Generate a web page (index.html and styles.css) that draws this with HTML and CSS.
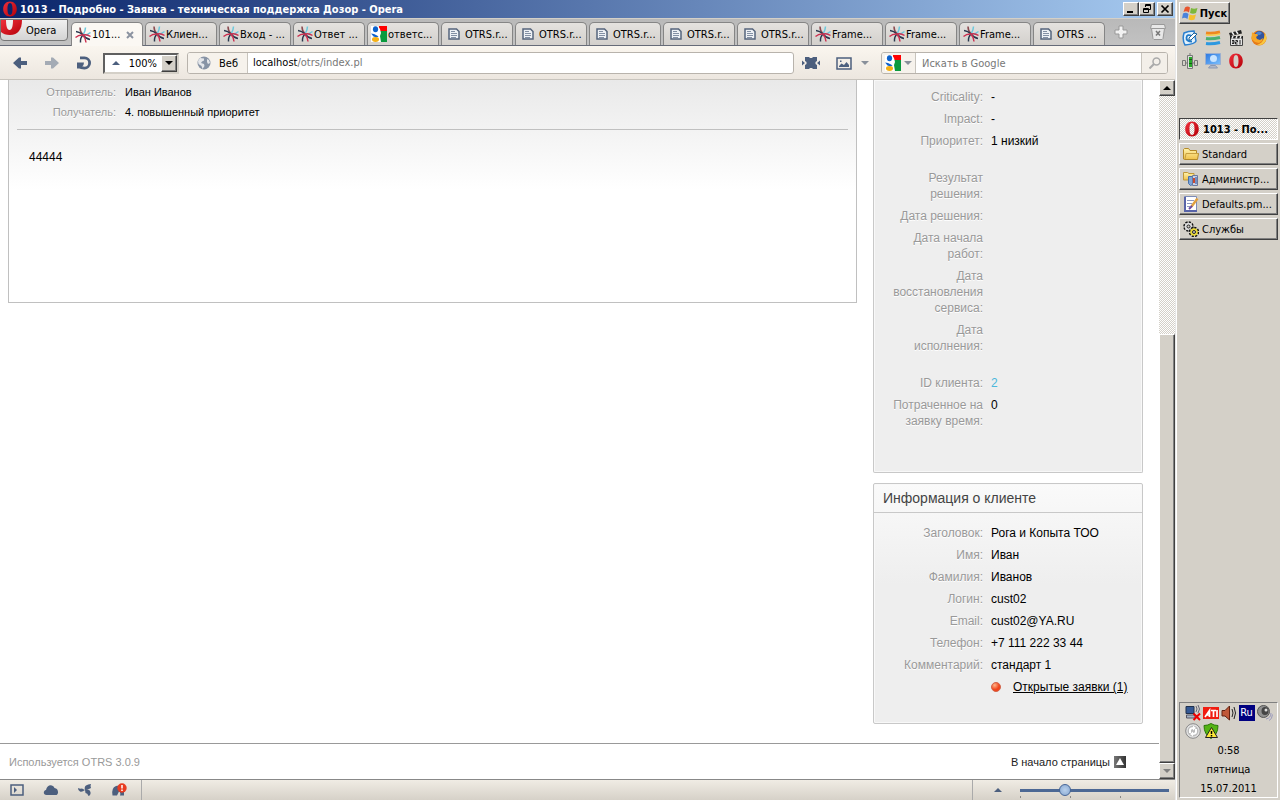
FILE: index.html
```html
<!DOCTYPE html>
<html lang="ru">
<head>
<meta charset="utf-8">
<title>1013 - Подробно - Заявка - техническая поддержка Дозор - Opera</title>
<link rel="stylesheet" href="styles.css">
</head>
<body>
<svg class="defs" aria-hidden="true">
  <defs>
    <linearGradient id="red" x1="0" y1="0" x2="1" y2="1"><stop offset="0" stop-color="#f0303c"/><stop offset="1" stop-color="#b40008"/></linearGradient>
    <linearGradient id="fold" x1="0" y1="0" x2="0" y2="1"><stop offset="0" stop-color="#fff3ac"/><stop offset="1" stop-color="#efc24c"/></linearGradient>
    <linearGradient id="dark" x1="0" y1="0" x2="1" y2="0"><stop offset="0" stop-color="#777"/><stop offset="1" stop-color="#333"/></linearGradient>
    <linearGradient id="screen" x1="0" y1="0" x2="1" y2="1"><stop offset="0" stop-color="#2c78e0"/><stop offset="1" stop-color="#7cc0fc"/></linearGradient>
    <radialGradient id="orb" cx=".35" cy=".3"><stop offset="0" stop-color="#ffb488"/><stop offset="1" stop-color="#f0441c"/></radialGradient>
  </defs>
  <symbol id="opera" viewBox="0 0 16 16"><path fill="url(#red)" fill-rule="evenodd" d="M8 .5c4.200 0 6.800 3.200 6.800 7.500S12.200 15.500 8 15.500 1.200 12.300 1.200 8 3.800.5 8 .5zm0 1.500C6 2 5.500 5 5.500 8S6 14 8 14s2.500-3 2.500-6S10 2 8 2z"/></symbol>
  <symbol id="otrs" viewBox="0 0 16 16"><g fill="none" stroke-width="1.500"><path stroke="#6cc8dc" d="M10.500 .5Q10.500 4 8 8M15.500 5.500Q12 8.500 8 8"/><path stroke="#8a4a50" d="M5 .5Q5 5 8 8"/><path stroke="#29384e" d="M1 4.500Q5 5 8 8Q11 12 15 12.500M8 8Q5 11 5.500 15.500"/><path stroke="#cc3050" d="M.5 10.500Q4 7.500 8 8Q12 7 15.500 9.500M8 8Q10.500 11 11 15.500"/></g></symbol>
  <symbol id="google" viewBox="0 0 16 16"><path fill="#f00" d="M8 0h8v5H8z"/><path fill="#0a9a3e" d="M9 5h7v11H9z"/><path fill="#fff" d="M0 0h7l2 3 1 4-1 3 1 6H0z"/><ellipse cx="4.500" cy="3.200" rx="2.600" ry="3" fill="#0c62cc"/><path fill="#1264cc" d="M0 7.500l3 .5 3 1.500 1.500 1-2 1-3-1z"/><ellipse cx="4.500" cy="13.500" rx="3.500" ry="2.400" fill="#f5b014"/></symbol>
  <symbol id="doc" viewBox="0 0 12 12"><path fill="#eef1f5" stroke="#55647c" stroke-width="1.500" d="M1 1h7.500L11 3.500V11H1z"/><path stroke="#8390a4" d="M3 3.500h4M3 5.500h6M3 7.500h6M3 9.500h5"/></symbol>
  <symbol id="arrow" viewBox="0 0 16 14"><path fill="currentColor" d="M7 1.500h2V5h6v4H9v3.500H7L1 7z"/></symbol>
  <symbol id="up" viewBox="0 0 8 4"><path fill="currentColor" d="M4 0l4 4H0z"/></symbol>
  <symbol id="down" viewBox="0 0 8 4"><path fill="currentColor" d="M0 0h8L4 4z"/></symbol>
</svg>

<div class="desktop">
<main class="window">
  <header class="titlebar">
    <svg class="i16"><use href="#opera"/></svg>
    <h1>1013 - Подробно - Заявка - техническая поддержка Дозор - Opera</h1>
    <div class="caption">
      <button class="bevel" aria-label="Свернуть"><svg viewBox="0 0 12 10"><path d="M2 7h6v2H2z"/></svg></button>
      <button class="bevel" aria-label="Восстановить"><svg viewBox="0 0 12 10"><path fill="none" stroke="#000" d="M4.500 3V.5h5v5H8M4 1.500h6M2.500 4.500h5v4h-5zM2 5.500h6"/></svg></button>
      <button class="bevel close" aria-label="Закрыть"><svg viewBox="0 0 12 10"><path fill="none" stroke="#000" stroke-width="1.700" d="M2.500 1.500l7 7M9.500 1.500l-7 7"/></svg></button>
    </div>
  </header>

  <nav class="tabbar">
    <button class="menu"><svg class="menu-logo" viewBox="0 0 21 16"><path fill="url(#red)" d="M0 0h21c0 9-4 15-12 15-4 0-7-1-9-3z"/><path fill="#eee" d="M5 0h7c0 6-1 10-3.500 10S5 6 5 0z"/></svg>Opera</button>
    <button class="tab active"><svg class="i16"><use href="#otrs"/></svg><span>101...</span><svg class="x" viewBox="0 0 8 8"><path stroke="#8b93a0" stroke-width="2" d="M1 1l6 6M7 1L1 7"/></svg></button>
    <button class="tab"><svg class="i16"><use href="#otrs"/></svg><span>Клиен...</span></button>
    <button class="tab"><svg class="i16"><use href="#otrs"/></svg><span>Вход - ...</span></button>
    <button class="tab"><svg class="i16"><use href="#otrs"/></svg><span>Ответ ...</span></button>
    <button class="tab"><svg class="i16"><use href="#google"/></svg><span>ответс...</span></button>
    <button class="tab"><svg class="idoc"><use href="#doc"/></svg><span>OTRS.r...</span></button>
    <button class="tab"><svg class="idoc"><use href="#doc"/></svg><span>OTRS.r...</span></button>
    <button class="tab"><svg class="idoc"><use href="#doc"/></svg><span>OTRS.r...</span></button>
    <button class="tab"><svg class="idoc"><use href="#doc"/></svg><span>OTRS.r...</span></button>
    <button class="tab"><svg class="idoc"><use href="#doc"/></svg><span>OTRS.r...</span></button>
    <button class="tab"><svg class="i16"><use href="#otrs"/></svg><span>Frame...</span></button>
    <button class="tab"><svg class="i16"><use href="#otrs"/></svg><span>Frame...</span></button>
    <button class="tab"><svg class="i16"><use href="#otrs"/></svg><span>Frame...</span></button>
    <button class="tab"><svg class="idoc"><use href="#doc"/></svg><span>OTRS ...</span></button>
    <button class="plain add" aria-label="Новая вкладка"><svg viewBox="0 0 14 14"><path fill="#f2f2f2" stroke="#999" d="M5 1h4v4h4v4H9v4H5V9H1V5h4z"/></svg></button>
    <button class="plain bin" aria-label="Закрытые вкладки"><svg viewBox="0 0 16 16"><path fill="#e8e8e8" stroke="#999" d="M1.500 .5h13l1 4h-1l-1.500 10-1 1H4l-1-1-1.500-10h-1z"/><path stroke="#999" d="M1.500 4.500h13"/><path stroke="#777" stroke-width="1.500" d="M6 7l4 4.500M10 7l-4 4.500"/></svg></button>
  </nav>

  <div class="toolbar">
    <button class="plain" aria-label="Назад"><svg class="nav"><use href="#arrow"/></svg></button>
    <button class="plain off" aria-label="Вперед"><svg class="nav flip"><use href="#arrow"/></svg></button>
    <button class="plain" aria-label="Обновить"><svg class="nav" viewBox="0 0 16 14"><path fill="none" stroke="currentColor" stroke-width="2.800" d="M4 1.900h4.500a5 5 0 0 1 0 10.200q-3.500 0-5-1.600"/><path fill="currentColor" d="M1 6.500h7L7.500 9 4.500 12.500H1z"/></svg></button>
    <div class="zoom"><svg class="tri"><use href="#up"/></svg><input aria-label="Масштаб" value="100%"><button class="bevel" aria-label="Выбрать масштаб"><svg class="tri"><use href="#down"/></svg></button></div>
    <div class="address">
      <button class="web"><svg viewBox="0 0 14 14"><circle cx="7" cy="7" r="6.500" fill="#8793a5"/><path fill="#e4e6ea" d="M3 2l4 .5 0 2-2 1-1 1.500 3 1 .5 2-2 3-1-3-3-2-.5-3zM10 3l2 1 1 3-2 1-1-2z"/></svg>Веб</button>
      <div class="url" contenteditable="true" role="textbox" aria-label="Адрес"><b>localhost</b>/otrs/index.pl</div>
    </div>
    <button class="plain" aria-label="По ширине"><svg class="fit" viewBox="0 0 18 12"><path fill="currentColor" d="M3 0h4l1 1h2l1-1h4v4l-1.500 1v2l1.500 1v4h-4l-1-1H8l-1 1H3V8l1.500-1V5L3 4zM0 3.500l3 2.500-3 2.500zM18 3.500L15 6l3 2.500z"/></svg></button>
    <button class="plain pics" aria-label="Изображения"><svg class="pic" viewBox="0 0 16 13"><path fill="none" stroke="currentColor" stroke-width="1.500" d="M1 1h14v11H1z"/><path fill="currentColor" d="M3 10V9l2.500-2.500L8 8l2.500-3L13 8v2zM4 3.500h1.500V5H4z"/></svg><svg class="tri"><use href="#down"/></svg></button>
    <div class="search">
      <button class="engine" aria-label="Поисковая система"><svg class="i16"><use href="#google"/></svg><svg class="tri"><use href="#down"/></svg></button>
      <input aria-label="Поиск" placeholder="Искать в Google">
      <button class="go" aria-label="Найти"><svg viewBox="0 0 12 12"><circle cx="7.500" cy="4.500" r="3.500" fill="none" stroke="#aaa" stroke-width="1.500"/><path stroke="#aaa" stroke-width="2" d="M5 7l-4.500 4.500"/></svg></button>
    </div>
  </div>

  <div class="view">
    <div class="page">
      <div class="columns">
        <article class="ticket">
          <dl class="sender">
            <dt>Отправитель:</dt><dd>Иван Иванов</dd>
            <dt>Получатель:</dt><dd>4. повышенный приоритет</dd>
          </dl>
          <p>44444</p>
        </article>
        <aside class="side">
          <section class="panel cut">
            <dl class="facts">
              <dt>Criticality:</dt><dd>-</dd>
              <dt>Impact:</dt><dd>-</dd>
              <dt>Приоритет:</dt><dd>1 низкий</dd>
              <dt class="group">Результат решения:</dt><dd></dd>
              <dt>Дата решения:</dt><dd></dd>
              <dt>Дата начала работ:</dt><dd></dd>
              <dt>Дата восстановления сервиса:</dt><dd></dd>
              <dt>Дата исполнения:</dt><dd></dd>
              <dt class="group">ID клиента:</dt><dd class="group"><a class="id" href="#">2</a></dd>
              <dt>Потраченное на заявку время:</dt><dd>0</dd>
            </dl>
          </section>
          <section class="panel client">
            <h2>Информация о клиенте</h2>
            <dl class="facts">
              <dt>Заголовок:</dt><dd>Рога и Копыта ТОО</dd>
              <dt>Имя:</dt><dd>Иван</dd>
              <dt>Фамилия:</dt><dd>Иванов</dd>
              <dt>Логин:</dt><dd>cust02</dd>
              <dt>Email:</dt><dd>cust02@YA.RU</dd>
              <dt>Телефон:</dt><dd>+7 111 222 33 44</dd>
              <dt>Комментарий:</dt><dd>стандарт 1</dd>
              <dt></dt><dd class="open"><svg viewBox="0 0 10 10"><circle cx="5" cy="5" r="4.500" fill="url(#orb)" stroke="#d0654c"/></svg><a href="#">Открытые заявки (1)</a></dd>
            </dl>
          </section>
        </aside>
      </div>
      <footer class="foot">
        <span>Используется OTRS 3.0.9</span>
        <a href="#">В начало страницы<svg viewBox="0 0 12 12"><path fill="url(#dark)" d="M0 0h12v12H0z"/><path fill="#fff" d="M6 2l4 7H2z"/></svg></a>
      </footer>
    </div>
    <div class="scroll">
      <button class="bevel" aria-label="Вверх"><svg class="tri"><use href="#up"/></svg></button>
      <div class="track"></div>
      <div class="thumb bevel"></div>
      <button class="bevel off" aria-label="Вниз"><svg class="tri"><use href="#down"/></svg></button>
    </div>
  </div>

  <div class="status">
    <div class="tools">
      <button class="plain" aria-label="Панели"><svg viewBox="0 0 16 14"><path fill="none" stroke="currentColor" stroke-width="1.500" d="M2 2h12v10H2z"/><path fill="currentColor" d="M5 4l3 3-3 3z"/></svg></button>
      <button class="plain" aria-label="Opera Link"><svg viewBox="0 0 16 14"><path fill="currentColor" d="M3.500 12C0 12 0 7.500 3 7 4 1 10 1 11.500 5c4 0 5 7 1 7z"/></svg></button>
      <button class="plain" aria-label="Opera Unite"><svg viewBox="0 0 16 14"><path fill="currentColor" d="M1 5q2 1 4 .5L8 7Q5 9.500 3 8.500 1 8 1 5zM14 1q-1 2 0 4l-3 1.500L8 7Q7 4 9 2.500 11 1 14 1zM8 7q5-1 5.500 2 .5 3-2 4-1-3-3-3z"/></svg></button>
      <button class="plain" aria-label="Opera Turbo"><svg viewBox="0 0 16 14"><path fill="currentColor" d="M1.500 12.500Q0 5 5 3t8 3v6.500H9q1-3-1-4l-2 4z"/><circle cx="11" cy="5" r="4.700" fill="#e83c20"/><path stroke="#fff" stroke-width="1.500" d="M11 2v3.500M11 6.500V8"/></svg></button>
    </div>
    <div class="level">
      <button class="plain" aria-label="Масштаб"><svg class="tri"><use href="#up"/></svg></button>
      <input type="range" min="20" max="300" value="100" aria-label="Масштаб страницы">
    </div>
  </div>
</main>

<aside class="taskbar">
  <button class="bevel start"><svg viewBox="0 0 16 16"><path fill="#e8552c" d="M3 2.500Q5.500 .5 8 2.500L7 7.500q-3-2-5.500-.5z"/><path fill="#7cb83c" d="M9 3q3 1.500 6.500 0L14 8q-3 1.500-6 0z"/><path fill="#4a84dc" d="M1 8.500q3-1.500 5.500.5L5.500 14q-3-2-5.500-.5z"/><path fill="#f4c030" d="M7.500 9.500q3 1.500 6.500 0l-1.500 5q-3 1.500-6 0z"/></svg>Пуск</button>
  <div class="quick">
    <svg viewBox="0 0 16 16"><path fill="#e4f2fc" stroke="#2a80d0" stroke-width="1.500" d="M2 3q4-2 10-2l2 10q-1 3-11 4Q0 10 2 3z"/><path fill="none" stroke="#207ac8" stroke-width="1.800" d="M10 6Q5 3.500 4.500 7.500T10 11.500"/><path fill="#fff" stroke="#186098" d="M7 8l5-5 3 1-6 6H7z"/></svg>
    <svg viewBox="0 0 16 16"><path fill="none" stroke="#f08820" stroke-width="3" d="M1 3q6 1 14-1"/><path fill="none" stroke="#f8d050" stroke-width="1.500" d="M1 5q6 1 14-1"/><path fill="none" stroke="#4cb070" stroke-width="3" d="M1 8.500q6 1 14-1"/><path fill="none" stroke="#2c98e0" stroke-width="3" d="M1 13.500q6 1 14-1"/></svg>
    <svg viewBox="0 0 16 16"><path fill="#222" d="M1 3l12-3 1 3.500L2 6z"/><path fill="#e4e4e4" stroke="#444" d="M2.500 6.500h12v9h-12z"/><path fill="#222" d="M2 6h13v2.500H2z"/><path stroke="#eee" stroke-width="1.500" d="M4 2l2 3M8 1l2 3M5 6l-1 2.500M9 6L8 8.500M13 6l-1 2.500"/><path fill="none" stroke="#222" d="M4 10.500h2v3H4M4 12h2M7.500 10.500h2V12h-2v2h2M12 10v4.500"/></svg>
    <svg viewBox="0 0 16 16"><circle cx="8" cy="8" r="7.500" fill="#e67a18"/><circle cx="8.500" cy="6" r="5" fill="#33549e"/><path fill="#4c84d0" d="M5 3q3-3 6 0l-2 2H6z"/><path fill="#f8a828" d="M1 2l2 2 3 0 1 1.500L5 7l1 2 3 1 3-2-1 3-3 2-4-1L.5 9z"/><path fill="#f8c840" d="M14 3q3 5 0 9-3 4-8 3 6-2 7-7z"/></svg>
    <svg viewBox="0 0 16 16"><path fill="#ddd" stroke="#777" d="M5.500 2.500h5v13h-5z"/><path fill="#28a828" d="M7 4h3v10H7z"/><path fill="#145c14" d="M7 6h3v1H7zM7 10h3v1H7z"/><path fill="none" stroke="#777" d="M8 2V0M.5 7.500h3v5h-3zM12.500 7.500h3v5h-3zM4 10h2M10 10h2"/></svg>
    <svg viewBox="0 0 16 16"><path fill="url(#screen)" stroke="#9cb0d0" d="M.5 .5h15v11H.5z"/><circle cx="8.500" cy="5.500" r="3.500" fill="#c8e4ff"/><path fill="#b0b8c8" stroke="#8c98b0" d="M5.500 12.500h5l2 2.500h-9z"/></svg>
    <svg><use href="#opera"/></svg>
  </div>
  <div class="tasks">
    <button class="bevel task current"><svg><use href="#opera"/></svg>1013 - По...</button>
    <button class="bevel task"><svg viewBox="0 0 16 16"><path fill="url(#fold)" stroke="#b48a28" d="M.5 13V3.500l1-1h4l1.500 2h6.500v3h2l-1 6h-13z"/><path fill="none" stroke="#c8a040" d="M2 13l1-5.500h12"/></svg>Standard</button>
    <button class="bevel task"><svg viewBox="0 0 16 16"><path fill="url(#fold)" stroke="#c09838" d="M.5 9V1.500h4l1.500 1h5V9z"/><path fill="#7ca4d8" stroke="#4870a8" d="M5.500 5.500h4v8l-2 1-2-2z"/><path fill="#c8d0e4" stroke="#6878a0" d="M9.500 4.500h5v10h-5z"/><path stroke="#c84830" stroke-width="2" d="M11 7v5"/><path stroke="#5878b8" stroke-width="1.500" d="M13 6v7"/></svg>Администр...</button>
    <button class="bevel task"><svg viewBox="0 0 16 16"><path fill="#fff" stroke="#7c8cb8" d="M1.500 .5h12v14h-12z"/><path fill="#5864a8" d="M1 14h13v2H1zM1 1h2v14H1z"/><path stroke="#8c98c0" d="M4 4.500h7M4 7.500h5M4 10.500h3"/><path stroke="#e0a040" stroke-width="2.500" d="M14.500 2.500l-6 8"/><path stroke="#6848a0" stroke-width="2" d="M9 10l-3 3"/></svg>Defaults.pm...</button>
    <button class="bevel task"><svg viewBox="0 0 16 16"><g fill="none"><circle cx="5.500" cy="5.500" r="4" stroke="#111" stroke-width="2.500" stroke-dasharray="2 1.100"/><circle cx="5.500" cy="5.500" r="2.800" stroke="#ddd" stroke-width="2"/><circle cx="5.500" cy="5.500" r="1.500" stroke="#222"/><circle cx="11" cy="11" r="4" stroke="#111" stroke-width="2.500" stroke-dasharray="2 1.100"/><circle cx="11" cy="11" r="2.800" stroke="#e8d838" stroke-width="2"/><circle cx="11" cy="11" r="1.500" stroke="#222"/></g></svg>Службы</button>
  </div>
  <div class="tray">
    <div class="tray-icons">
      <svg viewBox="0 0 16 16"><path fill="#345894" stroke="#20304c" d="M1 1.500h8v7H1z"/><path fill="#a8b4c4" stroke="#556" d="M1.500 10h8l1 3h-9z"/><path fill="none" stroke="#667" d="M11 1q2 3 0 6M13 0q3 4 0 8"/><path stroke="#e00" stroke-width="2" d="M8.500 8.500l6.500 6.500M15 8.500l-6.500 6.500"/></svg>
      <svg viewBox="0 0 16 16"><path fill="#f01c10" d="M0 2h16v12H0z"/><path fill="none" stroke="#fff" stroke-width="1.700" d="M2 12l4.500-6.500V12M4 10h3M8 5.500h5M10.500 5v7M14 5v7"/></svg>
      <svg viewBox="0 0 16 16"><path fill="#c05838" stroke="#602010" d="M1 5.500h3L8.500 1v14L4 11H1z"/><path fill="none" stroke="#222" d="M11 4q2 4 0 8M13 2q3 6 0 12"/></svg>
      <span class="lang">Ru</span>
      <svg viewBox="0 0 16 16"><circle cx="6.500" cy="6.500" r="6" fill="#909090" stroke="#555"/><ellipse cx="8" cy="6" rx="3.500" ry="4" fill="#444"/><circle cx="9" cy="5" r="1.500" fill="#ddd"/><path fill="none" stroke="#99b" d="M9 14q5-1 5-6M12 15.500q3-1 3.500-6"/></svg>
      <svg viewBox="0 0 16 16"><circle cx="8" cy="8" r="7.300" fill="#e4e4e4" stroke="#888"/><circle cx="8" cy="8" r="5.500" fill="#bbb"/><path fill="none" stroke="#fff" stroke-width="2" d="M5 10V7q0-2 4-2M11 6v3q0 2-4 2"/><path fill="#fff" d="M8 2.500L11 5 8 7.500zM8 8.500V13.500L5 11z"/></svg>
      <svg viewBox="0 0 16 16"><path fill="#54b414" stroke="#2c7808" d="M1 2.500q4 0 7-2 3 2 7 2 0 9-7 13Q1 11.500 1 2.500z"/><path fill="#fce838" stroke="#222" d="M8.500 4.500l6 10h-12z"/><path stroke="#000" stroke-width="1.500" d="M8.500 8v3M8.500 12v1.500"/></svg>
    </div>
    <time>0:58</time>
    <span>пятница</span>
    <time>15.07.2011</time>
  </div>
</aside>
</div>
</body>
</html>
```

FILE: styles.css
```css
* { box-sizing: border-box; }
body, h1, h2, dl, dd, p { margin: 0; font-weight: normal; }
body, button, input { font-family: "DejaVu Sans Condensed", "DejaVu Sans", sans-serif; font-size: 11px; color: #000; }
button { padding: 0; border: 0; background: none; display: flex; align-items: center; justify-content: center; }
svg { display: block; flex: none; }
.defs { position: absolute; width: 0; height: 0; }
.i16 { width: 16px; height: 16px; }
.idoc { width: 12px; height: 12px; margin: 0 4px 0 3px; }
.tri { width: 8px; height: 4px; }

.desktop { display: grid; grid-template-columns: 1fr 104px; height: 100vh; min-height: 780px; background: #d4d0c8; }
.window { display: flex; flex-direction: column; min-width: 0; border-right: 1px solid #e8e8e8; }
.bevel { background: #d4d0c8; border: 1px solid; border-color: #fff #404040 #404040 #fff; box-shadow: inset -1px -1px #808080; }

.titlebar { display: flex; align-items: center; gap: 2px; height: 18px; padding: 0 2px; background: linear-gradient(90deg, #0a246a, #a6caf0); color: #fff; }
.titlebar h1 { flex: 1; font: bold 11px "DejaVu Sans Condensed", "DejaVu Sans", sans-serif; white-space: nowrap; }
.caption { display: flex; }
.caption button { width: 16px; height: 14px; }
.caption .close { margin-left: 2px; }
.caption svg { width: 12px; height: 10px; }

.tabbar { display: flex; align-items: flex-end; gap: 2px; height: 28px; border-top: 1px solid #d4d0c8; background: linear-gradient(#b9b9b9, #c2c2c2); border-bottom: 1px solid #666b78; }
.menu { align-self: flex-start; width: 68px; height: 22px; margin-right: 1px; justify-content: flex-start; gap: 4px; background: linear-gradient(#f0f0f0, #d4d4d4); border: 1px solid #777; border-radius: 0 0 4px 4px; }
.menu-logo { width: 21px; height: 16px; align-self: flex-start; }
.tab { flex: 0 1 72px; min-width: 0; height: 23px; padding: 0 3px; justify-content: flex-start; gap: 1px; overflow: hidden; white-space: nowrap; background: linear-gradient(#e4e2df, #d3d0cc); border: 1px solid #858585; border-bottom: 0; border-radius: 5px 5px 0 0; }
.tab.active { background: #fbf8f3; height: 24px; margin-bottom: -1px; }
.x { width: 8px; height: 8px; margin-left: 5px; }
.add { align-self: center; margin-left: 7px; }
.add svg { width: 14px; height: 14px; }
.bin { align-self: center; margin: 0 9px 0 auto; }
.bin svg { width: 16px; height: 16px; }

.toolbar { display: flex; align-items: center; gap: 16px; height: 34px; padding: 1px 7px 0 12px; background: linear-gradient(#faf6ef, #ece6df); border-bottom: 1px solid #c8c4bd; color: #4c5f7e; }
.toolbar .plain { color: #4c5f7e; }
.toolbar .off { color: #a4abb5; }
.nav { width: 16px; height: 14px; }
.flip { transform: scaleX(-1); }
.zoom { display: flex; align-items: center; width: 76px; height: 21px; margin: 0 -8px 0 -5px; padding-left: 7px; background: #fff; border: 2px solid; border-color: #606060 #d4d0c8 #d4d0c8 #606060; }
.zoom input { flex: 1; min-width: 0; padding: 0; border: 0; text-align: right; margin-right: 4px; }
.zoom button { width: 16px; height: 17px; }
.address { flex: 1; display: flex; height: 22px; margin-right: -8px; background: #fff; border: 1px solid #b8b3ac; border-radius: 3px; overflow: hidden; }
.web { width: 60px; gap: 8px; background: #f6f2ec; border-right: 1px solid #c8c4bd; }
.web svg { width: 14px; height: 14px; }
.url { flex: 1; padding-left: 5px; line-height: 20px; color: #777; outline: 0; }
.url b { font-weight: normal; color: #000; }
.fit { width: 18px; height: 12px; }
.pic { width: 16px; height: 13px; }
.pics { gap: 9px; }
.pics .tri, .engine .tri { color: #888f9a; }
.search { display: flex; width: 287px; height: 22px; margin-left: -4px; background: #fff; border: 1px solid #b8b3ac; border-radius: 3px; overflow: hidden; }
.engine { width: 34px; gap: 3px; background: #f6f2ec; border-right: 1px solid #c8c4bd; }
.search input { flex: 1; min-width: 0; padding: 0 6px; border: 0; outline: 0; }
.search input::placeholder { color: #777; }
.go { width: 26px; background: #f3efe9; border-left: 1px solid #c8c4bd; }
.go svg { width: 12px; height: 12px; }

.view { flex: 1; display: flex; min-height: 0; background: #fff; }
.page { flex: 1; min-width: 0; display: flex; flex-direction: column; justify-content: space-between; font: 12px/16px "Liberation Sans", Arial, sans-serif; }
.page a { color: #000; }
.columns { display: grid; grid-template-columns: 1fr 270px; gap: 16px; align-items: start; padding: 0 16px 0 8px; }
dl { display: grid; }
dt { text-align: right; color: #999; text-shadow: 0 1px #fff; }
.ticket { min-height: 223px; padding: 0 8px; border: 1px solid #c0c0c0; border-top: 0; background: linear-gradient(#e9e9e9, #f3f3f3 50px, #fff 110px); }
.sender { grid-template-columns: 99px 1fr; gap: 4px 9px; padding: 4px 0 9px; border-bottom: 1px solid #c0c0c0; font-size: 11px; }
.ticket p { padding: 19px 12px; }
.side { display: grid; gap: 10px; }
.panel { border: 1px solid #c8c8c8; border-radius: 2px; background: #eee; box-shadow: inset 0 0 0 1px #f8f8f8; }
.cut { border-top: 0; border-radius: 0 0 2px 2px; padding: 9px 0 43px; }
.client { background: linear-gradient(#fafafa, #eee 100px); padding-bottom: 28px; }
.client h2 { padding: 6px 9px; border-bottom: 1px solid #c8c8c8; font-size: 14px; line-height: 16px; color: #444; }
.client .facts { padding-top: 12px; }
.facts { grid-template-columns: 94px 1fr; gap: 6px 8px; padding-left: 15px; }
.group { margin-top: 15px; }
.page .id { color: #4cb8dc; text-decoration: none; }
.open { display: flex; align-items: center; gap: 12px; }
.open svg { width: 10px; height: 10px; }
.foot { display: flex; justify-content: space-between; align-items: center; height: 36px; padding: 0 33px 0 9px; border-top: 1px solid #999; font-size: 11px; color: #999; }
.page .foot a { display: flex; align-items: center; gap: 4px; color: #222; text-decoration: none; }
.foot svg { width: 12px; height: 12px; }

.scroll { width: 16px; display: flex; flex-direction: column; background: repeating-conic-gradient(#fff 0 25%, #d4d0c8 0 50%) 0 0 / 2px 2px; }
.scroll button { height: 16px; }
.scroll .off { color: #808080; }
.track { flex: 239; }
.thumb { flex: 428; }

.status { display: flex; justify-content: space-between; height: 21px; background: linear-gradient(#f0ece4, #d6d1c8); border-top: 1px solid #888; }
.status .plain { color: #4c5f7e; }
.tools { display: flex; align-items: center; gap: 18px; width: 142px; padding-left: 9px; border-right: 1px solid #aaa; }
.tools svg { width: 16px; height: 14px; }
.level { display: flex; align-items: center; gap: 18px; width: 203px; padding: 0 6px 0 21px; border-left: 1px solid #aaa; }
.level input { flex: 1; min-width: 0; height: 16px; margin: 0; appearance: none; background: linear-gradient(#4c6894, #4c6894) center / 100% 3px no-repeat, repeating-linear-gradient(90deg, #888 0 1px, transparent 1px 50px) bottom / 100% 2px no-repeat; }
.level input::-webkit-slider-thumb { appearance: none; width: 12px; height: 12px; border: 1px solid #446496; border-radius: 50%; background: radial-gradient(#b8d0ec, #88a8d0); }

.taskbar { display: flex; flex-direction: column; padding: 2px 2px 2px 2px; border-left: 1px solid #fff; }
.start { align-self: flex-start; width: 51px; height: 22px; gap: 2px; font-weight: bold; }
.start svg { width: 16px; height: 16px; }
.quick { display: grid; grid-template-columns: repeat(4, 16px); gap: 7px; padding: 6px 3px 0; }
.quick svg, .task svg, .tray svg { width: 16px; height: 16px; }
.tasks { display: grid; gap: 3px; margin-top: 49px; }
.task { height: 22px; padding: 0 3px; justify-content: flex-start; gap: 3px; white-space: nowrap; overflow: hidden; }
.current { padding-left: 4px; font-weight: bold; background: repeating-conic-gradient(#fff 0 25%, #d4d0c8 0 50%) 0 0 / 2px 2px; border-color: #404040 #fff #fff #404040; box-shadow: none; }
.tray { display: grid; justify-items: center; gap: 5px; margin-top: auto; padding: 2px 4px 1px; border: 1px solid; border-color: #808080 #fff #fff #808080; line-height: 14px; }
.tray-icons { display: grid; grid-template-columns: repeat(5, 16px); gap: 2px; }
.lang { background: #000080; color: #fff; text-align: center; line-height: 16px; }
```
